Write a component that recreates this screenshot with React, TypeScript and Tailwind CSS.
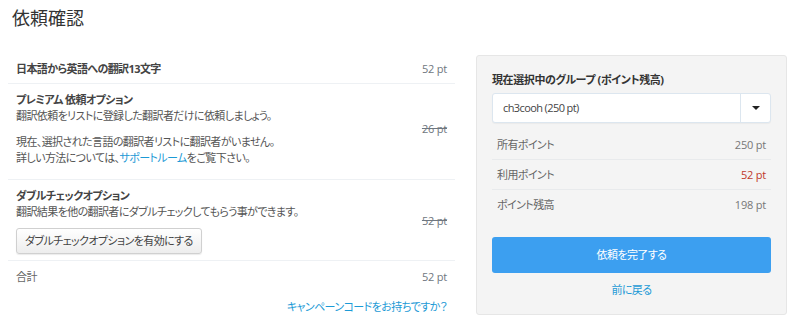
import React from 'react';

const font = { fontFamily: '"Open Sans", "Noto Sans CJK JP", sans-serif' };

const PriceRow: React.FC<{ price: string; struck?: boolean; children: React.ReactNode; className?: string }> = ({
  price,
  struck,
  children,
  className = '',
}) => (
  <div className={`flex items-center justify-between border-b border-[#eef1f4] px-2 ${className}`}>
    <div>{children}</div>
    <div className={`shrink-0 tracking-[-0.2px] text-[#6f7780] ${struck ? 'line-through' : ''}`}>{price}</div>
  </div>
);

const SummaryRow: React.FC<{ label: string; value: string; red?: boolean; last?: boolean }> = ({ label, value, red, last }) => (
  <div className={`flex h-[30px] items-center justify-between px-[5px] ${last ? '' : 'border-b border-[#e8eaec]'}`}>
    <span className="text-[#666]">{label}</span>
    <span className={`tracking-[-0.2px] ${red ? 'text-[#c0392b]' : 'text-[#777]'}`}>{value}</span>
  </div>
);

export default function App() {
  return (
    <div
      className="h-[328px] w-[800px] overflow-hidden bg-white px-2 text-[11px] leading-4 tracking-[-0.6px] text-[#555] [font-feature-settings:'palt']"
      style={font}
    >
      <h1 className="pl-1 pt-[7px] text-[18px] leading-[22px] tracking-[0px] text-[#333] [font-feature-settings:normal]">依頼確認</h1>

      <div className="mt-[26px] flex gap-[21px] pr-[5px]">
        <div className="w-[447px]">
          <PriceRow price="52 pt" className="pb-[6px] pt-[6px]">
            <div className="font-bold text-[#444]">日本語から英語への翻訳13文字</div>
          </PriceRow>

          <PriceRow price="26 pt" struck className="pb-[13px] pt-2">
            <div className="font-bold text-[#444]">プレミアム 依頼オプション</div>
            <div>翻訳依頼をリストに登録した翻訳者だけに依頼しましょう。</div>
            <div className="mt-[10px]">現在、選択された言語の翻訳者リストに翻訳者がいません。</div>
            <div>
              詳しい方法については、<span className="text-[#1c9ad6]">サポートルーム</span>をご覧下さい。
            </div>
          </PriceRow>

          <PriceRow price="52 pt" struck className="pb-[6px] pt-2">
            <div className="font-bold text-[#444]">ダブルチェックオプション</div>
            <div>翻訳結果を他の翻訳者にダブルチェックしてもらう事ができます。</div>
            <button className="mt-2 h-[26px] rounded-[3px] border border-[#d0d0d0] bg-gradient-to-b from-white to-[#ededed] px-[8px] text-[#444] shadow-[0_1px_1px_rgba(0,0,0,0.08)]">
              ダブルチェックオプションを有効にする
            </button>
          </PriceRow>

          <div className="flex items-center justify-between px-2 pb-2 pt-2">
            <span className="text-[#666]">合計</span>
            <span className="tracking-[-0.2px] text-[#6f7780]">52 pt</span>
          </div>

          <div className="mt-[6px] pr-2 text-right text-[#1c9ad6]">キャンペーンコードをお持ちですか？</div>
        </div>

        <div className="h-[260px] w-[311px] rounded-[3px] border border-[#e6e6e6] bg-[#f4f4f4] px-[15px] pt-4">
          <div className="font-bold tracking-[-0.4px] text-[#333]">現在選択中のグループ (ポイント残高)</div>
          <div className="mt-[5px] flex h-[30px] rounded-[3px] border border-[#dce6ef] bg-white shadow-[0_1px_1px_rgba(0,0,0,0.04)]">
            <div className="flex flex-1 items-center px-[10px] text-[#444]">ch3cooh (250 pt)</div>
            <div className="flex w-[30px] items-center justify-center border-l border-[#dce6ef]">
              <svg width="8" height="4" viewBox="0 0 8 4">
                <path d="M0 0h8L4 4z" fill="#222" />
              </svg>
            </div>
          </div>

          <div className="mt-[7px]">
            <SummaryRow label="所有ポイント" value="250 pt" />
            <SummaryRow label="利用ポイント" value="52 pt" red />
            <SummaryRow label="ポイント残高" value="198 pt" last />
          </div>

          <button className="mt-[17px] h-[36px] w-full rounded-[3px] bg-[#3c9ff0] text-white">依頼を完了する</button>
          <div className="mt-[9px] text-center text-[#1c9ad6]">前に戻る</div>
        </div>
      </div>
    </div>
  );
}
